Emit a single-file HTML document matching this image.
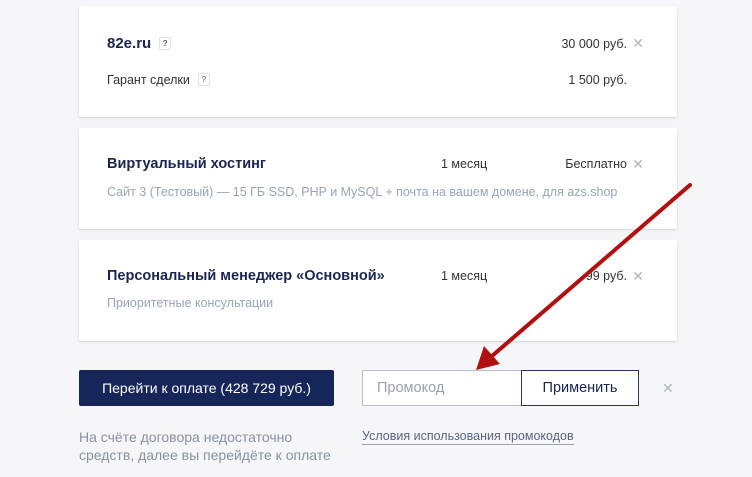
<!DOCTYPE html>
<html><head><meta charset="utf-8"><style>
body{margin:0;width:752px;height:477px;background:#f6f6f8;font-family:"Liberation Sans",sans-serif;position:relative;overflow:hidden;color:#1b2a4e}
.card{position:absolute;left:79px;width:598px;background:#fff;box-shadow:0 1px 2px rgba(40,50,80,.18);border-radius:2px}
.t{position:absolute;white-space:nowrap}
.b{font-weight:bold;color:#1b2550}
.q{display:inline-block;width:10px;height:11px;border:1px solid #e0e2e8;font-size:8px;text-align:center;line-height:11px;color:#555;vertical-align:2px;margin-left:8px;border-radius:2px}
.x{color:#b0b5c0;font-size:14px;font-weight:300}
.gray{color:#9aa3b8}
</style></head><body>
<div class="card" style="top:6px;height:111px">
<div class="t b" style="left:28px;top:29px;font-size:15px">82e.ru<span class="q">?</span></div>
<div class="t" style="right:50px;top:31px;font-size:12.5px;color:#333">30 000 руб.</div>
<div class="t x" style="right:33px;top:29px">✕</div>
<div class="t" style="left:28px;top:67px;font-size:12.5px;color:#333">Гарант сделки<span class="q">?</span></div>
<div class="t" style="right:50px;top:67px;font-size:12.5px;color:#333">1 500 руб.</div>
</div>
<div class="card" style="top:128px;height:101px">
<div class="t b" style="left:28px;top:28px;font-size:14.5px">Виртуальный хостинг</div>
<div class="t" style="left:362px;top:29px;font-size:12.5px;color:#333">1 месяц</div>
<div class="t" style="right:50px;top:29px;font-size:12.5px;color:#333">Бесплатно</div>
<div class="t x" style="right:33px;top:28px">✕</div>
<div class="t gray" style="left:28px;top:57px;font-size:12.5px">Сайт 3 (Тестовый) — 15 ГБ SSD, PHP и MySQL + почта на вашем домене, для azs.shop</div>
</div>
<div class="card" style="top:240px;height:101px">
<div class="t b" style="left:28px;top:28px;font-size:14.5px">Персональный менеджер «Основной»</div>
<div class="t" style="left:362px;top:29px;font-size:12.5px;color:#333">1 месяц</div>
<div class="t" style="right:50px;top:29px;font-size:12.5px;color:#333">99 руб.</div>
<div class="t x" style="right:33px;top:28px">✕</div>
<div class="t gray" style="left:28px;top:56px;font-size:12.5px">Приоритетные консультации</div>
</div>
<div class="t" style="left:79px;top:370px;width:255px;height:36px;background:#172659;color:#fff;font-size:14px;line-height:36px;text-align:center;border-radius:2px">Перейти к оплате (428 729 руб.)</div>
<div class="t" style="left:362px;top:370px;width:158px;height:34px;border:1px solid #b8bfd0;background:#fff;color:#9aa0ad;font-size:14.5px;line-height:34px;text-indent:14px">Промокод</div>
<div class="t" style="left:521px;top:370px;width:116px;height:34px;border:1px solid #2a3566;background:#fff;color:#1b2550;font-size:14.5px;line-height:34px;text-align:center">Применить</div>
<div class="t x" style="left:662px;top:380px">✕</div>
<div class="t" style="left:79px;top:428px;font-size:14px;color:#8890a4;line-height:18px">На счёте договора недостаточно<br>средств, далее вы перейдёте к оплате</div>
<div class="t" style="left:362px;top:429px;font-size:12.5px;color:#5a6484;border-bottom:1px solid #9aa0b8;padding-bottom:1px">Условия использования промокодов</div>
<svg style="position:absolute;left:0;top:0" width="752" height="477"><line x1="690" y1="185" x2="492" y2="356" stroke="#b01010" stroke-width="4" stroke-linecap="round"/><polygon points="476,370 484,346 500,364" fill="#b01010"/></svg>
</body></html>
